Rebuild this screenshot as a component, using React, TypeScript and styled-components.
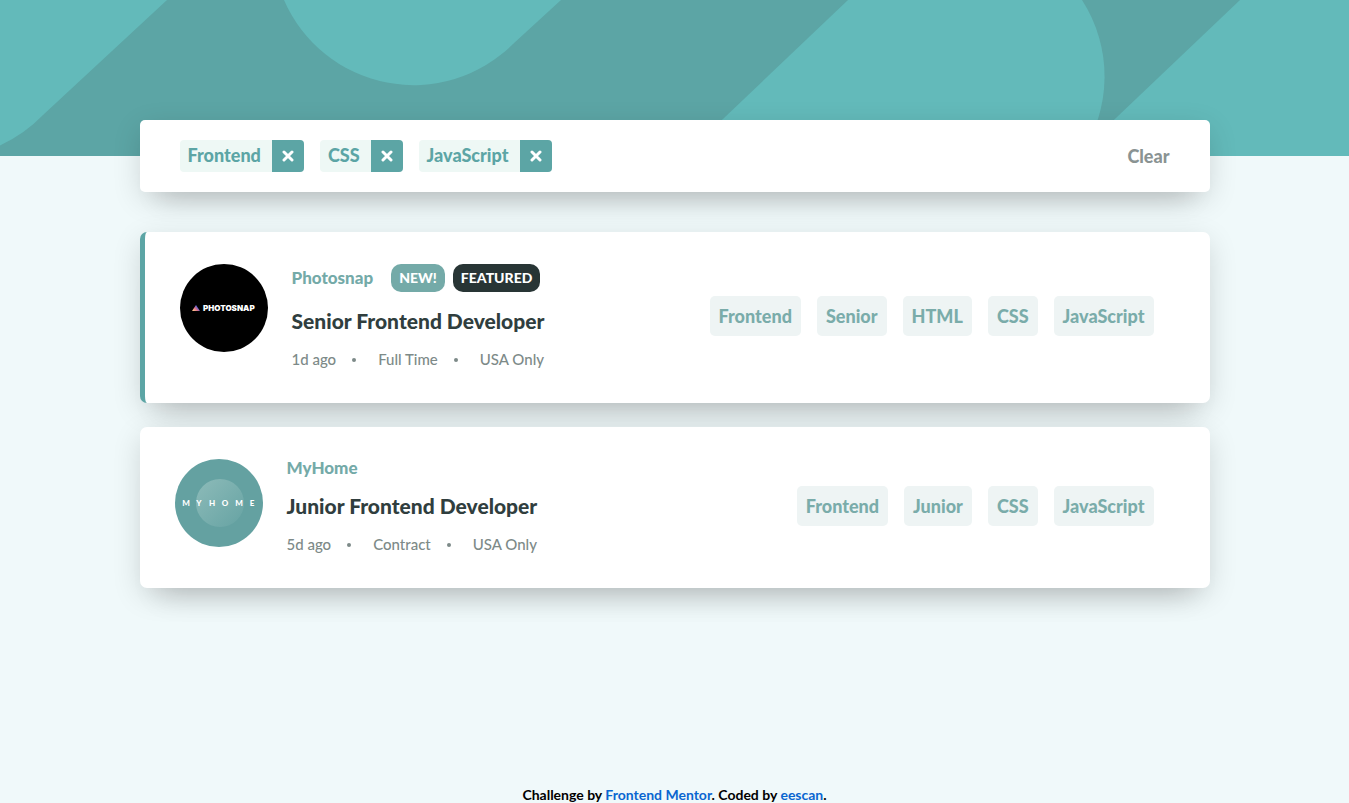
import React, { useState } from "react";
import styled, { createGlobalStyle } from "styled-components";

const GlobalStyle = createGlobalStyle`
  *, *::before, *::after { box-sizing: border-box; }
  body {
    margin: 0;
    background: #f0f9fa;
    font-family: Lato, "Liberation Sans", sans-serif;
    color: #2c3a3a;
  }
  button { font-family: inherit; border: 0; cursor: pointer; }
`;

const shadow =
  "0 28px 28px -22px rgba(0, 0, 0, 0.15), 0 8px 30px -2px rgba(0, 0, 0, 0.16)";

const Page = styled.div`
  display: flex;
  flex-direction: column;
  min-height: 100vh;
`;

const Banner = styled.header`
  height: 156px;
  background: #5ca5a5;
  overflow: hidden;
`;

const Pattern = styled.svg`
  display: block;
  width: 100%;
  height: 100%;
`;

const Content = styled.main`
  flex: 1;
  width: 100%;
  max-width: 1118px;
  margin: -36px auto 0;
  padding: 0 24px;
`;

const FilterBar = styled.section`
  display: flex;
  align-items: center;
  justify-content: space-between;
  min-height: 72px;
  padding: 20px 40px;
  margin-bottom: 40px;
  background: #fff;
  border-radius: 5px;
  box-shadow: ${shadow};
`;

const FilterList = styled.ul`
  display: flex;
  flex-wrap: wrap;
  gap: 16px;
  margin: 0;
  padding: 0;
  list-style: none;
`;

const Filter = styled.li`
  display: flex;
  height: 32px;
  border-radius: 4px;
  overflow: hidden;
  background: #eef8f5;
`;

const FilterName = styled.span`
  padding: 0 11px 0 8px;
  font-size: 18px;
  font-weight: 900;
  line-height: 30px;
  color: #5ca5a5;
`;

const RemoveButton = styled.button`
  display: grid;
  place-items: center;
  width: 32px;
  padding: 0;
  background: #5ca5a5;
`;

const ClearButton = styled.button`
  padding: 0;
  background: none;
  font-size: 18px;
  font-weight: 900;
  line-height: 32px;
  color: #8a9393;
`;

const JobList = styled.div`
  display: flex;
  flex-direction: column;
  gap: 24px;
`;

const Card = styled.article<{ $featured: boolean }>`
  display: flex;
  align-items: center;
  justify-content: space-between;
  flex-wrap: wrap;
  gap: 24px;
  padding: 32px 56px 32px 35px;
  background: #fff;
  border-left: ${(p) => (p.$featured ? "5px solid #5ca5a5" : "0")};
  border-radius: 7px;
  box-shadow: ${shadow};
`;

const Summary = styled.div`
  display: flex;
  gap: 24px;
`;

const Logo = styled.svg`
  flex: none;
  width: 88px;
  height: 88px;
`;

const CompanyRow = styled.div<{ $featured: boolean }>`
  display: flex;
  align-items: center;
  gap: 8px;
  height: ${(p) => (p.$featured ? 28 : 18)}px;
  margin-bottom: 16px;
`;

const Company = styled.h2`
  margin: 0 10px 0 0;
  font-size: 17px;
  font-weight: 900;
  line-height: 18px;
  color: #74aaa8;
`;

const Badge = styled.span<{ $dark?: boolean }>`
  padding: 0 8px;
  border-radius: 10px;
  background: ${(p) => (p.$dark ? "#283535" : "#74aaa8")};
  color: #fff;
  font-size: 14px;
  font-weight: 900;
  line-height: 28px;
`;

const Position = styled.h3`
  margin: 0 0 14px;
  font-size: 21px;
  font-weight: 900;
  line-height: 26px;
  color: #303e3e;
`;

const Meta = styled.ul`
  display: flex;
  margin: 0;
  padding: 0;
  list-style: none;
  font-size: 15px;
  line-height: 23px;
  font-weight: 500;
  color: #7d8a88;
`;

const MetaItem = styled.li`
  display: flex;
  align-items: center;
  & + &::before {
    content: "";
    width: 4px;
    height: 4px;
    margin: 0 22px 0 16px;
    border-radius: 50%;
    background: #7d8a88;
  }
`;

const Tags = styled.div`
  display: flex;
  flex-wrap: wrap;
  gap: 16px;
  padding-bottom: 4px;
`;

const Tag = styled.button`
  height: 40px;
  padding: 0 9px;
  border-radius: 5px;
  background: #eef4f4;
  font-size: 18px;
  font-weight: 900;
  line-height: 38px;
  color: #7aacaa;
`;

const Footer = styled.footer`
  margin-top: 24px;
  text-align: center;
  font-size: 14px;
  font-weight: 700;
  line-height: 16px;
  color: #000;
  a { color: #0a66d0; text-decoration: none; }
`;

const PhotosnapLogo = () => (
  <Logo viewBox="0 0 88 88" role="img" aria-label="Photosnap logo">
    <defs>
      <linearGradient id="snap" x1="0" y1="1" x2="1" y2="0.3">
        <stop offset="0.15" stopColor="#ffc08a" />
        <stop offset="0.5" stopColor="#d9718f" />
        <stop offset="0.75" stopColor="#5c62d6" />
      </linearGradient>
    </defs>
    <circle cx="44" cy="44" r="44" fill="#000" />
    <path d="M12 47 L16 41 L20 47 Z" fill="url(#snap)" />
    <text x="23" y="47" fontSize="8" fontWeight="900" fill="#fff" fontFamily="Inter, sans-serif">PHOTOSNAP</text>
  </Logo>
);

const MyHomeLogo = () => (
  <Logo viewBox="0 0 88 88" role="img" aria-label="MyHome logo">
    <defs>
      <linearGradient id="orb" x1="0" y1="0" x2="1" y2="1">
        <stop offset="0" stopColor="#8dbbb9" />
        <stop offset="1" stopColor="#66a3a3" />
      </linearGradient>
    </defs>
    <circle cx="44" cy="44" r="44" fill="#64a1a1" />
    <circle cx="45" cy="44" r="24" fill="url(#orb)" />
    <g fontSize="8" fontWeight="900" fill="#fff" textAnchor="middle">
      {"MYHOME".split("").map((letter, i) => (
        <text key={i} x={[11, 24, 37, 50, 64, 77][i]} y="47">{letter}</text>
      ))}
    </g>
  </Logo>
);

const Cross = () => (
  <svg width="12" height="12" viewBox="0 0 12 12" aria-hidden="true">
    <path d="M2 2 L10 10 M10 2 L2 10" stroke="#fff" strokeWidth="3" strokeLinecap="round" />
  </svg>
);

const jobs = [
  {
    company: "Photosnap",
    logo: <PhotosnapLogo />,
    isNew: true,
    featured: true,
    position: "Senior Frontend Developer",
    meta: ["1d ago", "Full Time", "USA Only"],
    tags: ["Frontend", "Senior", "HTML", "CSS", "JavaScript"],
  },
  {
    company: "MyHome",
    logo: <MyHomeLogo />,
    isNew: false,
    featured: false,
    position: "Junior Frontend Developer",
    meta: ["5d ago", "Contract", "USA Only"],
    tags: ["Frontend", "Junior", "CSS", "JavaScript"],
  },
];

export default function App() {
  const [filters, setFilters] = useState(["Frontend", "CSS", "JavaScript"]);
  const addFilter = (tag: string) =>
    setFilters((list) => (list.includes(tag) ? list : [...list, tag]));
  const visible = jobs.filter((job) => filters.every((f) => job.tags.includes(f)));

  return (
    <Page>
      <GlobalStyle />
      <Banner>
        <Pattern viewBox="0 0 1349 156" preserveAspectRatio="xMidYMid slice" aria-hidden="true">
          <g fill="#63baba">
            <path d="M167 0 L43 115 A141 141 0 0 1 -53 158 L-53 0 Z" />
            <path d="M284 0 A141 141 0 0 0 513 44 L561 0 Z" />
            <path d="M848 0 L684 156 H1080 A141 141 0 0 0 1082 0 Z" />
            <path d="M1240 0 L1076 156 H1349 V0 Z" />
          </g>
        </Pattern>
      </Banner>
      <Content>
        <FilterBar aria-label="Active filters">
          <FilterList>
            {filters.map((name) => (
              <Filter key={name}>
                <FilterName>{name}</FilterName>
                <RemoveButton
                  aria-label={`Remove ${name}`}
                  onClick={() => setFilters(filters.filter((f) => f !== name))}
                >
                  <Cross />
                </RemoveButton>
              </Filter>
            ))}
          </FilterList>
          <ClearButton onClick={() => setFilters([])}>Clear</ClearButton>
        </FilterBar>
        <JobList>
          {visible.map((job) => (
            <Card key={job.company} $featured={job.featured}>
              <Summary>
                {job.logo}
                <div>
                  <CompanyRow $featured={job.featured}>
                    <Company>{job.company}</Company>
                    {job.isNew && <Badge>NEW!</Badge>}
                    {job.featured && <Badge $dark>FEATURED</Badge>}
                  </CompanyRow>
                  <Position>{job.position}</Position>
                  <Meta>
                    {job.meta.map((item) => (
                      <MetaItem key={item}>{item}</MetaItem>
                    ))}
                  </Meta>
                </div>
              </Summary>
              <Tags>
                {job.tags.map((tag) => (
                  <Tag key={tag} onClick={() => addFilter(tag)}>{tag}</Tag>
                ))}
              </Tags>
            </Card>
          ))}
        </JobList>
      </Content>
      <Footer>
        Challenge by <a href="https://www.frontendmentor.io">Frontend Mentor</a>. Coded by{" "}
        <a href="#eescan">eescan</a>.
      </Footer>
    </Page>
  );
}
